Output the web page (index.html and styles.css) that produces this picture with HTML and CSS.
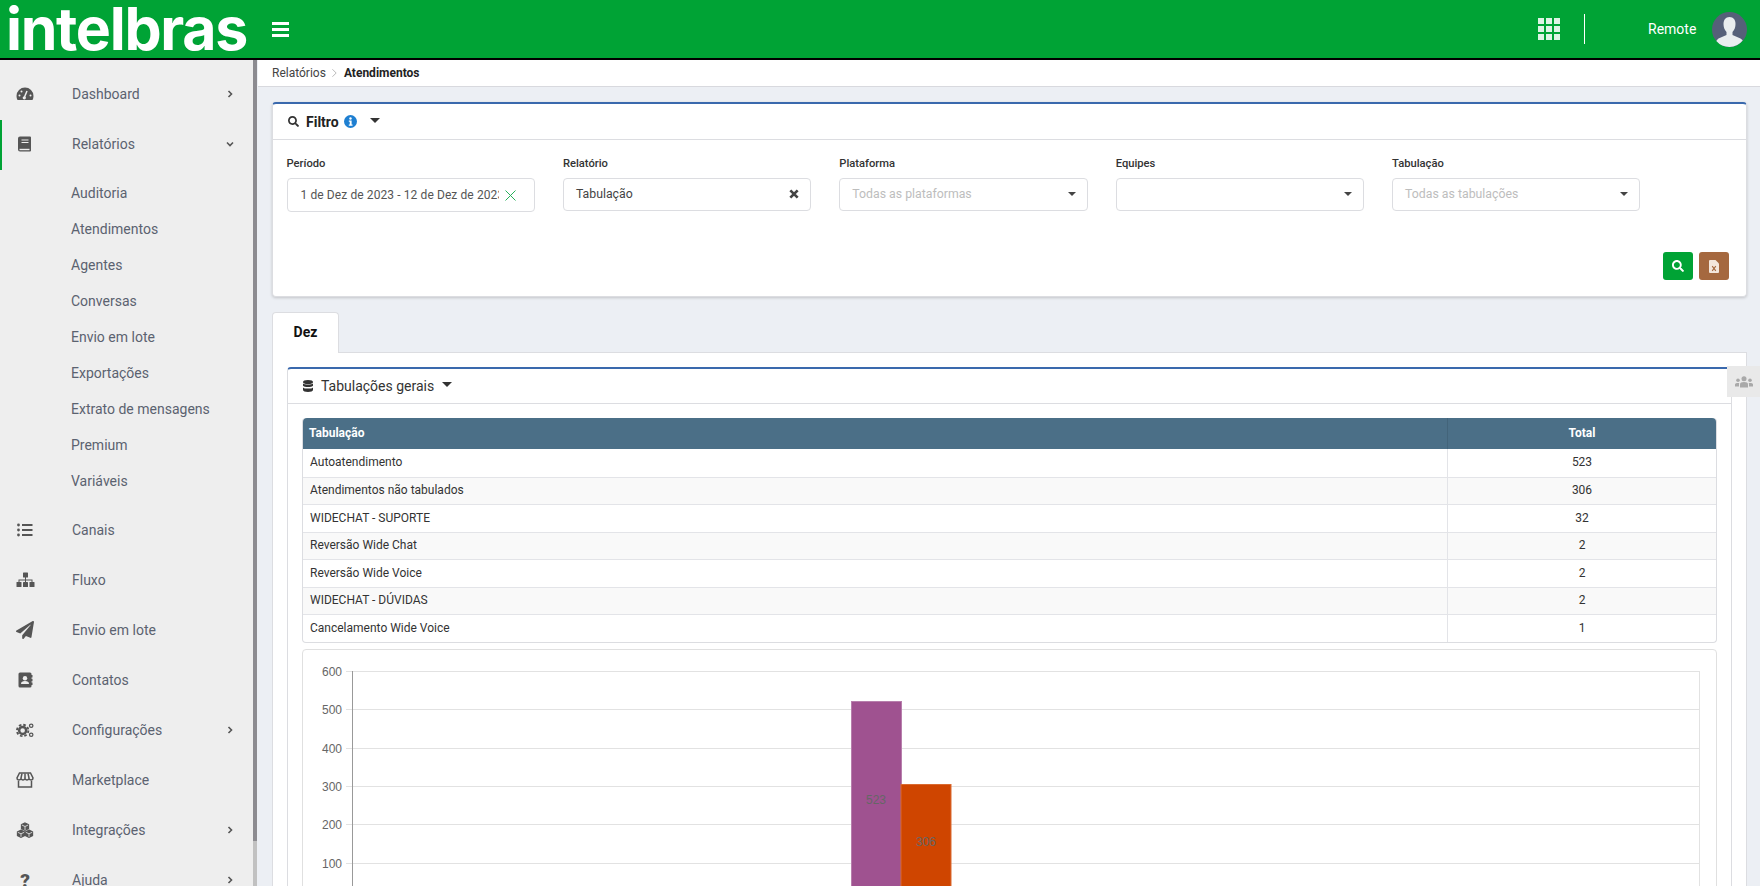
FILE: index.html
```html
<!DOCTYPE html>
<html lang="pt-BR">
<head>
<meta charset="utf-8">
<title>Relatórios - Atendimentos</title>
<link rel="stylesheet" href="styles.css">
</head>
<body>
<div class="app">
  <header class="topbar">
    <div class="logo">intelbras</div>
    <button class="menu-toggle" aria-label="Menu"><span></span><span></span><span></span></button>
    <div class="topbar-right">
      <svg class="apps-icon" viewBox="0 0 22 22"><g fill="#dff3e5"><rect width="6" height="6"/><rect x="8" width="6" height="6"/><rect x="16" width="6" height="6"/><rect y="8" width="6" height="6"/><rect x="8" y="8" width="6" height="6"/><rect x="16" y="8" width="6" height="6"/><rect y="16" width="6" height="6"/><rect x="8" y="16" width="6" height="6"/><rect x="16" y="16" width="6" height="6"/></g></svg>
      <div class="topbar-divider"></div>
      <span class="user-name">Remote</span>
      <svg class="avatar" viewBox="0 0 35 35"><circle cx="17.5" cy="17.5" r="17.5" fill="#566079"/><path d="M17.500 5c4 0 6 3 6 7 0 3-1 6-3 8v3l8 3.500c1 .5 1.800 1.200 2.200 2A17.500 17.500 0 0 1 17.500 35 17.500 17.500 0 0 1 4.300 29c.5-1 1.200-1.800 2.200-2.500l8-3.500v-3c-2-2-3-5-3-8 0-4 2-7 6-7z" fill="#e9edef"/></svg>
    </div>
  </header>

  <div class="app-body">
    <aside class="sidebar">
      <nav class="nav">
        <a class="nav-item">
          <svg class="nav-icon" viewBox="0 0 18 18"><path d="M9 2.500a8.500 8.500 0 0 0-8.500 8.500c0 1.500.4 2.900 1 4h15c.6-1.100 1-2.500 1-4A8.500 8.500 0 0 0 9 2.500z" fill="#555"/><path d="M8.500 12 11 6" stroke="#eee" stroke-width="1.500"/><g fill="#eee"><circle cx="8.300" cy="12.800" r="1.600"/><circle cx="3.500" cy="10.500" r="1"/><circle cx="5.500" cy="6.500" r="1"/><circle cx="14.500" cy="10.500" r="1"/></g></svg>
          <span class="nav-label">Dashboard</span>
          <svg class="chev" viewBox="0 0 8 8"><path d="M2.500 1 5.500 4 2.500 7" /></svg>
        </a>
        <a class="nav-item nav-item-open">
          <svg class="nav-icon" viewBox="0 0 18 18"><path d="M4 1.500h10a1 1 0 0 1 1 1v13a1 1 0 0 1-1 1H4a2 2 0 0 1-2-2v-11a2 2 0 0 1 2-2z" fill="#555"/><path d="M3.500 13.800h10v1.400h-10z" fill="#eee"/><path d="M5.500 5h7M5.500 7.500h7" stroke="#eee" stroke-width="1"/></svg>
          <span class="nav-label">Relatórios</span>
          <svg class="chev" viewBox="0 0 8 8"><path d="M1 2.500 4 5.500 7 2.500" /></svg>
        </a>
        <div class="subnav">
          <a class="subnav-item">Auditoria</a>
          <a class="subnav-item">Atendimentos</a>
          <a class="subnav-item">Agentes</a>
          <a class="subnav-item">Conversas</a>
          <a class="subnav-item">Envio em lote</a>
          <a class="subnav-item">Exportações</a>
          <a class="subnav-item">Extrato de mensagens</a>
          <a class="subnav-item">Premium</a>
          <a class="subnav-item">Variáveis</a>
        </div>
        <a class="nav-item">
          <svg class="nav-icon" viewBox="0 0 18 18"><g fill="#555"><circle cx="2.500" cy="4" r="1.400"/><circle cx="2.500" cy="9" r="1.400"/><circle cx="2.500" cy="14" r="1.400"/><rect x="6" y="3" width="10.500" height="2"/><rect x="6" y="8" width="10.500" height="2"/><rect x="6" y="13" width="10.500" height="2"/></g></svg>
          <span class="nav-label">Canais</span>
        </a>
        <a class="nav-item">
          <svg class="nav-icon nav-icon-wide" viewBox="0 0 19 18"><g fill="#555"><rect x="7" y="1.500" width="5" height="5" rx=".6"/><rect x="0.500" y="11" width="5" height="5" rx=".6"/><rect x="7" y="11" width="5" height="5" rx=".6"/><rect x="13.500" y="11" width="5" height="5" rx=".6"/><path d="M9 6h1v2.500h6.500V11h-1V9.500H10V11H9V9.500H3.500V11h-1V8.500H9z"/></g></svg>
          <span class="nav-label">Fluxo</span>
        </a>
        <a class="nav-item">
          <svg class="nav-icon" viewBox="0 0 512 512"><path fill="#555" d="M476 3.200L12.500 270.600c-18.100 10.400-15.800 35.600 2.200 43.200L121 358.400l287.300-253.200c5.500-4.900 13.300 2.600 8.600 8.300L176 407v80.500c0 23.600 28.500 32.900 42.500 15.800L282 426l124.600 52.200c14.200 6 30.400-2.900 33-18.200l72-432C515 7.800 493.300-6.800 476 3.200z"/></svg>
          <span class="nav-label">Envio em lote</span>
        </a>
        <a class="nav-item">
          <svg class="nav-icon" viewBox="0 0 18 18"><path d="M4 1.500h10a1.500 1.500 0 0 1 1.500 1.500v12a1.500 1.500 0 0 1-1.500 1.500H4A1.500 1.500 0 0 1 2.500 15V3A1.500 1.500 0 0 1 4 1.500z" fill="#555"/><rect x="15" y="4" width="1.500" height="2.500" fill="#555"/><rect x="15" y="7.800" width="1.500" height="2.500" fill="#555"/><rect x="15" y="11.500" width="1.500" height="2.500" fill="#555"/><circle cx="9" cy="7.300" r="2.200" fill="#eee"/><path d="M5 13c0-2 1.500-2.900 4-2.900s4 .9 4 2.900z" fill="#eee"/></svg>
          <span class="nav-label">Contatos</span>
        </a>
        <a class="nav-item">
          <svg class="nav-icon nav-icon-wide" viewBox="0 0 20 18"><g fill="none" stroke="#555"><circle cx="7" cy="9.500" r="3.700" stroke-width="2.600"/><circle cx="7" cy="9.500" r="6" stroke-width="2" stroke-dasharray="2.700 2"/><circle cx="16" cy="4.500" r="1.800" stroke-width="1.300"/><circle cx="16" cy="14" r="1.800" stroke-width="1.300"/></g></svg>
          <span class="nav-label">Configurações</span>
          <svg class="chev" viewBox="0 0 8 8"><path d="M2.500 1 5.500 4 2.500 7" /></svg>
        </a>
        <a class="nav-item">
          <svg class="nav-icon" viewBox="0 0 18 18"><g fill="none" stroke="#555" stroke-width="1.500"><path d="M3.500 2h11l2.500 5c0 2.500-3 2.500-4 .7-1 1.800-3 1.800-4 0-1 1.800-3 1.800-4 0-1 1.800-4 1.800-4-.7z"/><path d="M2.500 10v6h13v-6"/><path d="M6 2.500 5 7M12 2.500 13 7M9 2.500V7"/></g></svg>
          <span class="nav-label">Marketplace</span>
        </a>
        <a class="nav-item">
          <svg class="nav-icon" viewBox="0 0 18 18"><g stroke="#555" stroke-width="1.300" fill="#555"><path d="M9 2 12.500 3.700 12.500 7.500 9 9.200 5.500 7.500 5.500 3.700z"/><path d="M5 9.200 8.500 11 8.500 14.500 5 16.200 1.500 14.500 1.500 11z"/><path d="M13 9.200 16.500 11 16.500 14.500 13 16.200 9.500 14.500 9.500 11z"/></g><g stroke="#eee" fill="none" stroke-width=".8"><path d="M5.800 4 9 5.500 12.200 4M9 5.500V9M1.800 11.300 5 12.800 8.200 11.300M5 12.800v3M9.800 11.300 13 12.800 16.200 11.300M13 12.800v3"/></g></svg>
          <span class="nav-label">Integrações</span>
          <svg class="chev" viewBox="0 0 8 8"><path d="M2.500 1 5.500 4 2.500 7" /></svg>
        </a>
        <a class="nav-item">
          <span class="nav-glyph">?</span>
          <span class="nav-label">Ajuda</span>
          <svg class="chev" viewBox="0 0 8 8"><path d="M2.500 1 5.500 4 2.500 7" /></svg>
        </a>
      </nav>
    </aside>
    <div class="scrollbar"><div class="scrollbar-thumb"></div></div>

    <main class="main">
      <div class="breadcrumb">
        <span>Relatórios</span>
        <svg class="crumb-sep" viewBox="0 0 8 12"><path d="M1.500 1.500 6 6 1.500 10.500"/></svg>
        <strong>Atendimentos</strong>
      </div>

      <div class="content">
        <section class="card filter-card">
          <div class="filter-head">
            <svg class="icon-search" viewBox="0 0 512 512"><path fill="#333" d="M505 442.700L405.300 343c-4.500-4.500-10.600-7-17-7H372c27.600-35.300 44-79.700 44-128C416 93.100 322.900 0 208 0S0 93.100 0 208s93.100 208 208 208c48.300 0 92.700-16.400 128-44v16.300c0 6.400 2.500 12.500 7 17l99.700 99.700c9.400 9.400 24.600 9.400 33.900 0l28.300-28.300c9.400-9.400 9.400-24.600.1-34zM208 336c-70.700 0-128-57.200-128-128 0-70.700 57.200-128 128-128 70.700 0 128 57.200 128 128 0 70.700-57.200 128-128 128z"/></svg>
            <span class="filter-title">Filtro</span>
            <svg class="icon-info" viewBox="0 0 14 14"><circle cx="7" cy="7" r="7" fill="#1e7fd1"/><circle cx="7" cy="3.800" r="1.300" fill="#fff"/><path d="M5.200 6h3v4.200h1v1.300H5.200v-1.300h1V7.300h-1z" fill="#fff"/></svg>
            <span class="caret caret-filter"></span>
          </div>
          <div class="filter-body">
            <div class="fields">
              <div class="field">
                <label class="field-label">Período</label>
                <div class="control control-date">
                  <span class="date-value">1 de Dez de 2023 - 12 de Dez de 2023</span>
                  <svg class="icon-clear" viewBox="0 0 11 11"><path d="M.5.500l10 10M10.500.500l-10 10"/></svg>
                </div>
              </div>
              <div class="field">
                <label class="field-label">Relatório</label>
                <div class="control">
                  <span class="control-value">Tabulação</span>
                  <svg class="icon-times" viewBox="0 0 9 9"><path d="M1.200 1.200l6.600 6.600M7.800 1.200 1.200 7.800"/></svg>
                </div>
              </div>
              <div class="field">
                <label class="field-label">Plataforma</label>
                <div class="control">
                  <span class="control-placeholder">Todas as plataformas</span>
                  <span class="caret caret-small"></span>
                </div>
              </div>
              <div class="field">
                <label class="field-label">Equipes</label>
                <div class="control">
                  <span class="control-placeholder"></span>
                  <span class="caret caret-small"></span>
                </div>
              </div>
              <div class="field">
                <label class="field-label">Tabulação</label>
                <div class="control">
                  <span class="control-placeholder">Todas as tabulações</span>
                  <span class="caret caret-small"></span>
                </div>
              </div>
            </div>
            <div class="filter-actions">
              <button class="btn btn-search" aria-label="Buscar"><svg viewBox="0 0 512 512"><path fill="#fff" d="M505 442.700L405.300 343c-4.500-4.500-10.600-7-17-7H372c27.600-35.300 44-79.700 44-128C416 93.100 322.900 0 208 0S0 93.100 0 208s93.100 208 208 208c48.300 0 92.700-16.400 128-44v16.300c0 6.400 2.500 12.500 7 17l99.700 99.700c9.400 9.400 24.600 9.400 33.900 0l28.300-28.300c9.400-9.400 9.400-24.600.1-34zM208 336c-70.700 0-128-57.200-128-128 0-70.700 57.200-128 128-128 70.700 0 128 57.200 128 128 0 70.700-57.200 128-128 128z"/></svg></button>
              <button class="btn btn-export" aria-label="Exportar"><svg viewBox="0 0 10 13"><path d="M1 0h5.500L10 3.500V12a1 1 0 0 1-1 1H1a1 1 0 0 1-1-1V1a1 1 0 0 1 1-1z" fill="#f3e6dc"/><path d="M3.200 6.200 6.800 10.800M6.800 6.200 3.200 10.800" stroke="#a5683f" stroke-width="1.100"/></svg></button>
            </div>
          </div>
        </section>

        <div class="tabs">
          <div class="tab tab-active">Dez</div>
        </div>
        <section class="tab-panel">
          <div class="card inner-card">
            <div class="inner-head">
              <svg class="icon-db" viewBox="0 0 10 12"><g fill="#333"><ellipse cx="5" cy="2" rx="5" ry="2"/><path d="M0 3.400C1 4.800 9 4.800 10 3.400v2.400C9 7.400 1 7.400 0 5.800z"/><path d="M0 7.400C1 9 9 9 10 7.400V10c0 1.100-2.200 2-5 2s-5-.9-5-2z"/></g></svg>
              <span class="inner-title">Tabulações gerais</span>
              <span class="caret caret-inner"></span>
            </div>
            <div class="inner-body">
              <table class="data-table">
                <thead>
                  <tr><th class="col-name">Tabulação</th><th class="col-total">Total</th></tr>
                </thead>
                <tbody>
                  <tr><td>Autoatendimento</td><td class="num">523</td></tr>
                  <tr><td>Atendimentos não tabulados</td><td class="num">306</td></tr>
                  <tr><td>WIDECHAT - SUPORTE</td><td class="num">32</td></tr>
                  <tr><td>Reversão Wide Chat</td><td class="num">2</td></tr>
                  <tr><td>Reversão Wide Voice</td><td class="num">2</td></tr>
                  <tr><td>WIDECHAT - DÚVIDAS</td><td class="num">2</td></tr>
                  <tr><td>Cancelamento Wide Voice</td><td class="num">1</td></tr>
                </tbody>
              </table>
              <div class="chart-card">
                <svg class="chart" viewBox="0 0 1411 300" width="1411" height="300">
                  <g class="grid">
                    <line x1="42" x2="1396" y1="21.500" y2="21.500"/>
                    <line x1="42" x2="1396" y1="59.500" y2="59.500"/>
                    <line x1="42" x2="1396" y1="98.500" y2="98.500"/>
                    <line x1="42" x2="1396" y1="136.500" y2="136.500"/>
                    <line x1="42" x2="1396" y1="174.500" y2="174.500"/>
                    <line x1="42" x2="1396" y1="213.500" y2="213.500"/>
                    <line x1="1395.500" x2="1395.500" y1="21" y2="300"/>
                  </g>
                  <line class="axis" x1="48.500" x2="48.500" y1="21" y2="300"/>
                  <g class="ticks">
                    <text x="38" y="25.500">600</text>
                    <text x="38" y="63.500">500</text>
                    <text x="38" y="102.500">400</text>
                    <text x="38" y="140.500">300</text>
                    <text x="38" y="178.500">200</text>
                    <text x="38" y="217.500">100</text>
                  </g>
                  <rect class="bar-a" x="547.500" y="51.500" width="50" height="250"/>
                  <rect class="bar-b" x="597" y="134.500" width="50" height="166"/>
                  <text class="bar-label" x="572" y="154">523</text>
                  <text class="bar-label" x="622" y="196">306</text>
                </svg>
              </div>
            </div>
          </div>
        </section>
      </div>
    </main>

    <div class="side-tab">
      <svg viewBox="0 0 18 12"><g fill="#a9a9a9"><circle cx="9" cy="2.800" r="2.500"/><path d="M5 11.500V8.300C5 6.800 6.500 6 9 6s4 .8 4 2.300v3.200z"/><circle cx="3" cy="4.300" r="1.800"/><path d="M0 10.500V8.500C0 7.500 1 7 3 7c.6 0 1 0 1.300.1-.2.400-.3.800-.3 1.200v2.200z"/><circle cx="15" cy="4.300" r="1.800"/><path d="M18 10.500V8.500C18 7.500 17 7 15 7c-.6 0-1 0-1.300.1.200.4.300.8.300 1.200v2.200z"/></g></svg>
    </div>
  </div>
</div>
</body>
</html>
```
FILE: styles.css
```css
* { box-sizing: border-box; }
html, body { height: 100%; margin: 0; overflow: hidden; }
body { font-family: Roboto, "Liberation Sans", sans-serif; font-size: 13px; color: #333; background: #eceff4; }

.app { display: flex; flex-direction: column; height: 100vh; }

/* top bar */
.topbar { flex: 0 0 60px; display: flex; align-items: center; background: #00a335; border-bottom: 2px solid #000; }
.logo { width: 272px; padding-left: 6px; font-family: Inter, sans-serif; font-weight: 700; font-size: 59px; line-height: 58px; letter-spacing: -1.3px; color: #fff; white-space: nowrap; }
.menu-toggle { display: flex; flex-direction: column; justify-content: space-between; width: 17px; height: 15px; padding: 0; border: 0; background: none; }
.menu-toggle span { display: block; height: 3px; background: #fff; }
.topbar-right { margin-left: auto; display: flex; align-items: center; padding-right: 13px; }
.apps-icon { width: 22px; height: 22px; }
.topbar-divider { width: 1px; height: 30px; background: #fff; margin-left: 24px; margin-right: 63px; }
.user-name { color: #fff; font-size: 14px; width: 64px; }
.avatar { width: 35px; height: 35px; }

/* layout */
.app-body { position: relative; flex: 1; display: flex; min-height: 0; }
.sidebar { width: 253px; flex: none; background: #eee; padding-top: 9px; overflow: hidden; }
.scrollbar { width: 4px; flex: none; background: #c1c1c1; }
.scrollbar-thumb { height: 781px; background: #8c8b90; }
.main { flex: 1; min-width: 0; overflow: hidden; padding-left: 1px; background: #eceff4; }

/* side nav */
.nav-item { display: flex; align-items: center; height: 50px; padding-left: 16px; color: #5b6270; font-size: 14px; }
.nav-item-open { position: relative; }
.nav-item-open::before { content: ""; position: absolute; left: 0; top: 1px; width: 2px; height: 50px; background: #00a335; }
.nav-icon { width: 18px; height: 18px; flex: none; }
.nav-icon-wide { width: 19px; }
.nav-icon-wide + .nav-label { margin-left: 37px; }
.nav-label { margin-left: 38px; flex: 1; }
.nav-glyph { width: 18px; text-align: center; font-weight: 900; font-size: 19px; color: #555; flex: none; }
.chev { width: 8px; height: 8px; margin-right: 19px; flex: none; fill: none; stroke: #555; stroke-width: 1.600; }
.subnav { padding-top: 6px; padding-bottom: 6px; }
.subnav-item { display: flex; align-items: center; height: 36px; padding-left: 71px; color: #5b6270; font-size: 14px; }

/* breadcrumb */
.breadcrumb { height: 27px; display: flex; align-items: center; padding-left: 14px; background: #fff; border-bottom: 1px solid #d8d9de; font-size: 12px; color: #444; }
.breadcrumb strong { color: #222; font-weight: 700; font-size: 12px; }
.crumb-sep { width: 7px; height: 10px; margin: 0 6px 0 5px; fill: none; stroke: #bbb; stroke-width: 1.200; }

/* cards */
.content { padding: 15px 13px 0 14px; }
.card { background: #fff; border: 1px solid #dcdde1; border-top: 2px solid #3a69ad; border-radius: 4px; }
.filter-card { height: 195px; box-shadow: 0 1px 3px rgba(0,0,0,.18); }
.filter-head { height: 36px; display: flex; align-items: center; padding: 0 0 0 15px; border-bottom: 1px solid #dcdde1; }
.icon-search { width: 11px; height: 11px; }
.filter-title { margin-left: 7px; font-size: 14px; font-weight: 700; color: #222; }
.icon-info { width: 13px; height: 13px; margin-left: 5px; }
.caret { display: inline-block; width: 0; height: 0; border-left: 5px solid transparent; border-right: 5px solid transparent; border-top: 5px solid #333; }
.caret-filter { margin-left: 13px; margin-top: -2px; }

.filter-body { padding: 17px 0 0 13.500px; }
.fields { display: flex; gap: 28px; }
.field { width: 248.400px; }
.field-label { display: block; height: 21px; line-height: 13px; font-size: 11.200px; font-weight: 500; color: #333; }
.control { position: relative; display: flex; align-items: center; justify-content: space-between; height: 33px; padding: 0 11px 2px 12px; border: 1px solid #dcdde1; border-radius: 4px; background: #fff; font-size: 12.300px; }
.control-date { padding: 0 18px 0 13px; height: 34px; }
.date-value { width: 198px; overflow: hidden; white-space: nowrap; font-size: 12px; letter-spacing: .1px; color: #555; }
.icon-clear { width: 11px; height: 11px; fill: none; stroke: #26b05a; stroke-width: 1; }
.control-value { color: #444; }
.control-placeholder { color: #bdbdbd; }
.icon-times { width: 10px; height: 10px; fill: none; stroke: #444; stroke-width: 2.400; }
.caret-small { border-left-width: 4px; border-right-width: 4px; border-top-width: 4px; border-top-color: #444; }
.filter-actions { display: flex; justify-content: flex-end; gap: 6px; margin-top: 40px; padding-right: 17px; }
.btn { display: flex; align-items: center; justify-content: center; width: 30px; height: 28px; padding: 0; border: 0; border-radius: 3px; }
.btn-search { background: #00a335; }
.btn-search svg { width: 12px; height: 12px; }
.btn-export { background: #a5683f; }
.btn-export svg { width: 10px; height: 13px; }

/* tabs */
.tabs { display: flex; margin-top: 15px; }
.tab { width: 67px; height: 41px; display: flex; align-items: center; justify-content: center; padding-bottom: 2px; background: #fff; border: 1px solid #dcdde1; border-bottom: 0; border-radius: 4px 4px 0 0; font-size: 14px; font-weight: 700; color: #111; margin-bottom: -1px; position: relative; }
.tab-panel { padding: 14px 14px 0; background: #fff; border: 1px solid #dcdde1; }
.inner-card { border-bottom: 0; }
.inner-head { height: 35px; display: flex; align-items: center; padding-left: 15px; padding-bottom: 1px; border-bottom: 1px solid #dcdde1; }
.icon-db { width: 10px; height: 12px; }
.inner-title { margin-left: 8px; font-size: 14px; color: #333; }
.caret-inner { margin-left: 8px; margin-top: -3px; }
.inner-body { padding: 14px 14px 0; }

/* table */
.data-table { width: 100%; table-layout: fixed; border-collapse: separate; border-spacing: 0; border: 1px solid #dcdde1; border-top: 0; border-radius: 4px; font-size: 12px; color: #333; }
.data-table th { height: 31px; padding: 0 6px 2px; background: #4b6f87; color: #fff; font-size: 12px; font-weight: 700; text-align: left; }
.data-table th:first-child { border-top-left-radius: 4px; }
.data-table th:last-child { border-top-right-radius: 4px; }
.data-table .col-total { width: 269px; text-align: center; border-left: 1px solid #43647a; }
.data-table td { height: 27.500px; padding: 0 7px 1px; border-top: 1px solid #e3e4e8; }
.data-table tbody tr:first-child td { border-top: 0; }
.data-table tbody tr:nth-child(even) { background: #f9f9f9; }
.data-table .num { text-align: center; border-left: 1px solid #e3e4e8; }

/* chart */
.chart-card { margin-top: 6px; height: 300px; overflow: hidden; border: 1px solid #e0e0e0; border-radius: 4px; background: #fff; }
.chart { display: block; margin-left: 1px; }
.grid line { stroke: #e2e2e2; stroke-width: 1; }
.axis { stroke: #999; stroke-width: 1; }
.ticks text { font-family: "Liberation Sans", Arial, sans-serif; font-size: 12px; fill: #666; text-anchor: end; }
.bar-a { fill: #9f5290; stroke: #b77fac; stroke-width: 1; }
.bar-b { fill: #cf4500; stroke: #da6a30; stroke-width: 1; }
.bar-label { font-family: "Liberation Sans", Arial, sans-serif; font-size: 12px; fill: #666; text-anchor: middle; }

/* floating team tab */
.side-tab { position: absolute; top: 306px; right: 0; width: 33px; height: 31px; display: flex; align-items: center; justify-content: center; background: #e9e9e9; }
.side-tab svg { width: 18px; height: 12px; }
```
